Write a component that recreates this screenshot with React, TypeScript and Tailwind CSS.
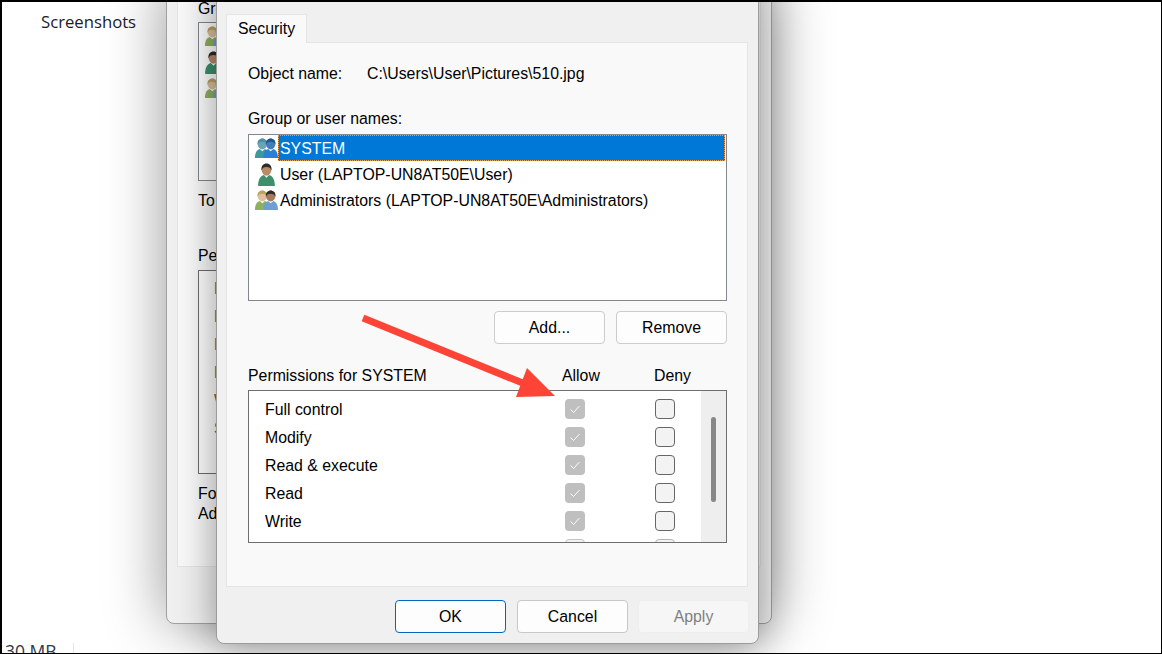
import React from "react";

const sans = "font-['Liberation_Sans',Arial,sans-serif]";

function Person({ x, skin, hair, body }: { x: number; skin: string; hair: string; body: string }) {
  return (
    <g transform={`translate(${x} 0)`}>
      <path d="M0 19c0-5 1.800-7.800 4.500-8.500L7 12.500l2.500-2c2.700.7 4.500 3.500 4.500 8.500z" fill={body} />
      <ellipse cx="7" cy="5.700" rx="4.500" ry="5.200" fill={skin} />
      <path d="M2.500 6.500C1.800 2.500 4.500.5 7 .5s5.200 2 4.500 6C11 4.500 9.500 3.600 7 3.600S3 4.500 2.500 6.500z" fill={hair} />
    </g>
  );
}

function SystemIcon() {
  return (
    <svg width="23" height="20" viewBox="0 0 22 19" className="shrink-0">
      <Person x={0} skin="#6ba4b4" hair="#4b8fa0" body="#3f97a2" />
      <Person x={8} skin="#3f7fc0" hair="#20558f" body="#2a80d4" />
    </svg>
  );
}

function UserIcon() {
  return (
    <svg width="17" height="23" viewBox="0 0 16 22" className="shrink-0">
      <path d="M0 22c0-6 2-9.500 5.500-10.500L8 14l2.500-2.500C14 12.500 16 16 16 22z" fill="#3f8f6b" />
      <ellipse cx="8" cy="6.500" rx="4.600" ry="5.800" fill="#b98a68" />
      <path d="M3.300 7.500C2.500 2.500 5.200.5 8 .5s5.500 2 4.700 7c-.5-2.700-2.200-3.700-4.700-3.700S3.800 4.800 3.300 7.500z" fill="#2c2a2a" />
    </svg>
  );
}

function AdminIcon() {
  return (
    <svg width="23" height="20" viewBox="0 0 22 19" className="shrink-0">
      <Person x={0} skin="#dcc19c" hair="#b9a262" body="#8fb061" />
      <Person x={8} skin="#a87a5c" hair="#2e2a2a" body="#6f9fd0" />
    </svg>
  );
}

function Check() {
  return (
    <svg width="20" height="20" viewBox="0 0 20 20">
      <path d="M5.500 10.500l3 3 6-6.500" fill="none" stroke="#fff" strokeWidth="1" />
    </svg>
  );
}

function PermRow({ label }: { label: string }) {
  return (
    <div className="flex h-[28px] shrink-0 items-center">
      <span className="w-[300px] pt-[2px]">{label}</span>
      <span className="h-[20px] w-[20px] rounded-[4px] bg-[#bfbfbf]">
        <Check />
      </span>
      <span className="ml-[70px] h-[20px] w-[20px] rounded-[4px] border-[1.5px] border-[#666666] bg-[#f3f3f3]" />
    </div>
  );
}

function WinButton({ label, className }: { label: string; className: string }) {
  return (
    <div className={`flex h-[33px] w-[111px] items-center justify-center rounded-[4px] border ${className}`}>{label}</div>
  );
}

const users = [
  { icon: <SystemIcon />, name: "SYSTEM" },
  { icon: <UserIcon />, name: "User (LAPTOP-UN8AT50E\\User)" },
  { icon: <AdminIcon />, name: "Administrators (LAPTOP-UN8AT50E\\Administrators)" },
];

const perms = ["Full control", "Modify", "Read & execute", "Read", "Write"];
const backPerms = ["Full control", "Modify", "Read & execute", "Read", "Write", "Special permissions"];
const backIcons = [<AdminIcon key="a" />, <UserIcon key="u" />, <AdminIcon key="b" />];
const clipped = "block w-[19px] overflow-hidden whitespace-nowrap";

export default function App() {
  return (
    <div className={`relative h-[654px] w-[1162px] overflow-hidden border-t-2 border-r border-b border-l-2 border-black bg-white ${sans} text-[15.85px] leading-[20px] text-black`}>
      <div className="flex h-full flex-col justify-between font-['Open_Sans',sans-serif] text-[#1b1b2b]">
        <div className="pl-[39px] pt-[8px] text-[16.7px] leading-[24px]">Screenshots</div>
        <div className="-mb-[6px] flex h-[16px] items-start pl-[3px] text-[17.5px] leading-[22px] text-[#333a45]">
          <span className="-mt-[3px] w-[68px]">30 MB</span>
          <span className="h-[16px] w-px bg-[#e6e6e6]" />
        </div>
      </div>

      {/* window behind */}
      <div className="absolute left-[164px] top-[-22px] h-[644px] w-[606px] rounded-[8px] border border-[#a0a0a0] bg-[#f0f0f0] pl-[10px] pr-[10px] pt-[9px] shadow-[0_0_60px_rgba(0,0,0,0.42)]">
        <div className="h-[577px] border border-[#e5e5e5] bg-[#f9f9f9] pl-[20px] pt-[8px]">
          <div className={clipped}>Group or user names:</div>
          <div className="mt-[3px] h-[159px] w-[500px] border border-[#828790] bg-white pl-[6px]">
            {backIcons.map((icon, i) => (
              <div key={i} className="flex h-[26px] items-center">
                {icon}
              </div>
            ))}
          </div>
          <div className={`mt-[10px] ${clipped}`}>To change permissions, click Edit.</div>
          <div className={`mt-[35px] ${clipped}`}>Permissions for SYSTEM</div>
          <div className="mt-[4px] h-[204px] w-[500px] border border-[#6e6e6e] bg-white pl-[15px] pt-[4px] text-[#8a5a20]">
            {backPerms.map((p) => (
              <div key={p} className="flex h-[28px] items-center">
                <span className="block w-[3px] overflow-hidden whitespace-nowrap">{p}</span>
              </div>
            ))}
          </div>
          <div className={`mt-[10px] ${clipped}`}>For special permissions or advanced settings,</div>
          <div className={clipped}>Advanced.</div>
        </div>
      </div>

      {/* front dialog */}
      <div className="absolute left-[214px] top-[-22px] h-[664px] w-[543px] rounded-[8px] border border-[#9c9c9c] bg-[#f0f0f0] pt-[33px] shadow-[0_0_40px_rgba(0,0,0,0.42)]">
        <div className="ml-[9px] w-[522px]">
          <div className="relative z-10 -mb-px flex h-[29px] w-[81px] items-center justify-center border border-b-0 border-[#e5e5e5] bg-[#f9f9f9]">
            Security
          </div>
          <div className="h-[545px] border border-[#e5e5e5] bg-[#f9f9f9] pl-[21px] pt-[21px]">
            <div className="flex">
              <span className="w-[119px]">Object name:</span>
              <span>C:\Users\User\Pictures\510.jpg</span>
            </div>
            <div className="mt-[25px]">Group or user names:</div>
            <div className="mt-[5px] h-[167px] w-[479px] border border-[#828790] bg-white pl-[6px]">
              {users.map((u, i) => (
                <div key={u.name} className="flex h-[26px] items-center">
                  <span className="flex w-[23px] justify-center">{u.icon}</span>
                  {i === 0 ? (
                    <span className="flex h-[26px] w-[447px] items-center border border-dotted border-[#e8a050] bg-[#0078d7] pl-px pt-[2px] text-white">
                      {u.name}
                    </span>
                  ) : (
                    <span className="ml-[2px] pt-[2px]">{u.name}</span>
                  )}
                </div>
              ))}
            </div>
            <div className="mt-[10px] flex w-[479px] justify-end gap-[11px]">
              <WinButton label="Add..." className="border-[#cccccc] bg-[#fdfdfd]" />
              <WinButton label="Remove" className="border-[#cccccc] bg-[#fdfdfd]" />
            </div>
            <div className="mt-[22px] flex">
              <span className="w-[314px]">Permissions for SYSTEM</span>
              <span className="w-[92px]">Allow</span>
              <span>Deny</span>
            </div>
            <div className="mt-[4px] flex h-[153px] w-[479px] overflow-hidden border border-[#6e6e6e] bg-white">
              <div className="flex-1 overflow-hidden pl-[16px] pt-[4px]">
                {perms.map((p) => (
                  <PermRow key={p} label={p} />
                ))}
                <div className="flex h-[28px] items-center pl-[300px]">
                  <span className="h-[20px] w-[20px] rounded-[4px] border border-[#c4c4c4] bg-[#f3f3f3]" />
                  <span className="ml-[70px] h-[20px] w-[20px] rounded-[4px] border border-[#b4b4b4] bg-[#f3f3f3]" />
                </div>
              </div>
              <div className="w-[25px] bg-[#eeeeee] pl-[10px] pt-[26px]">
                <div className="h-[85px] w-[5px] rounded-full bg-[#878787]" />
              </div>
            </div>
          </div>
        </div>
        <div className="mt-[13px] flex justify-end pr-[9px]">
          <WinButton label="OK" className="border-[#0067c0] bg-[#fdfdfd]" />
          <WinButton label="Cancel" className="ml-[11px] border-[#c8c8c8] bg-[#fdfdfd]" />
          <WinButton label="Apply" className="ml-[10px] border-[#eeeeee] bg-[#f6f6f6] text-[#808080]" />
        </div>
      </div>

      {/* red annotation arrow */}
      <svg className="absolute left-[-2px] top-[-2px]" width="1162" height="654" viewBox="0 0 1162 654">
        <path d="M363 318L530 386" stroke="#fd4436" strokeWidth="7" fill="none" />
        <path d="M527 368L555 396L516 397Z" fill="#fd4436" />
      </svg>
    </div>
  );
}
